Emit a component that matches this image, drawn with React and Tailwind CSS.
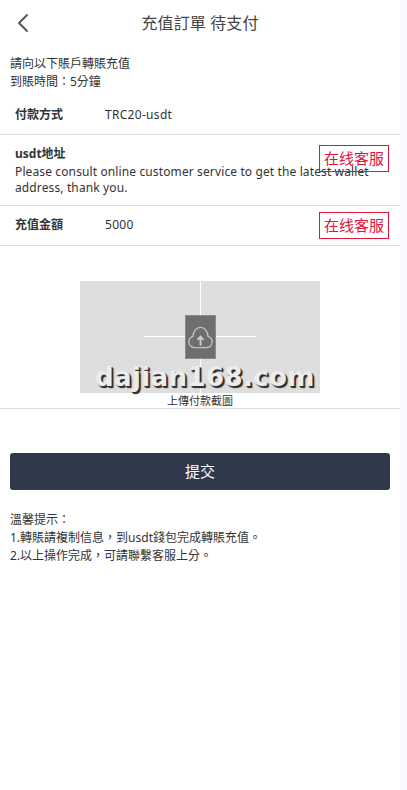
import { ChevronLeft } from "lucide-react";

const font = "font-['Noto_Sans','Noto_Sans_CJK_TC',sans-serif]";

const ServiceTag = ({ className }) => (
  <span className={`absolute right-[11px] border border-[#e0143c] px-[4px] h-[27px] leading-[25px] text-[15px] text-[#e0143c] whitespace-nowrap ${className}`}>
    在线客服
  </span>
);

const App = () => {
  return (
    <div className={`${font} w-full min-h-[790px] bg-[#f8f9ff] text-[#333]`}>
      <div className="w-[400px] min-h-[790px] bg-white">
        {/* header */}
        <div className="relative h-[46px] flex items-center justify-center text-[16px] tracking-[0.1px] text-[#444]">
          <ChevronLeft size={32} strokeWidth={1.4} className="absolute left-[7px] top-[7px] text-[#555]" />
          <span>充值訂單 待支付</span>
        </div>

        <div className="px-[10px] pt-[9px] text-[12px] leading-[18px]">
          <p>請向以下賬戶轉賬充值</p>
          <p>到賬時間：5分鐘</p>
        </div>

        {/* info rows */}
        <div className="mt-[7px] flex items-center h-[37px] pb-[2px] px-[15px] text-[12px] border-b border-[#ddd]">
          <b className="w-[90px] font-bold">付款方式</b>
          <span className="tracking-[0.3px]">TRC20-usdt</span>
        </div>
        <div className="relative px-[15px] pt-[11px] h-[71px] text-[12px] leading-[16px] border-b border-[#ddd]">
          <b className="block font-bold">usdt地址</b>
          <p className="mt-[2px] tracking-[0.12px]">Please consult online customer service to get the latest wallet address, thank you.</p>
          <ServiceTag className="top-[10px]" />
        </div>
        <div className="relative flex items-center h-[40px] pb-[2px] px-[15px] text-[12px] border-b border-[#ddd]">
          <b className="w-[90px] font-bold">充值金額</b>
          <span className="tracking-[0.3px]">5000</span>
          <ServiceTag className="top-[6px]" />
        </div>

        {/* upload */}
        <div className="mt-[35px] border-b border-[#ddd] h-[128px] flex flex-col items-center">
          <div className="relative w-[240px] h-[112px] shrink-0 bg-[#dedede] flex items-center justify-center">
            <div className="absolute left-[120px] top-0 bottom-0 w-px bg-white" />
            <div className="absolute left-[64px] top-[55px] w-[112px] h-px bg-white" />
            <div className="relative w-[31px] h-[44px] bg-[#6e6e6e] border border-[#8a8a8a] flex items-center justify-center">
              <svg width="30" height="30" viewBox="0 0 30 30" fill="none" stroke="#c4c4c4" strokeWidth="1.4">
                <path d="M9 26h12c3.500 0 6-2.600 6-6 0-2.800-1.800-5-4.200-5.700C22.600 9.400 19.400 5 15 5S7.400 9.400 7.200 14.300C4.800 15 3 17.200 3 20c0 3.400 2.500 6 6 6z" />
                <path d="M15 24v-9M12 18l3-3.500 3 3.500" strokeWidth="1.800" stroke="#d0d0d0" />
              </svg>
            </div>
            <span className="absolute left-[15px] top-[80px] text-[26px] leading-[32px] font-bold tracking-[0.4px] text-[#ececec] font-['DejaVu_Sans',sans-serif] whitespace-nowrap [text-shadow:1px_1px_0_#333,2px_2px_1px_#222]">
              dajian168.com
            </span>
          </div>
          <span className="mt-[1px] text-[11px] leading-[14px] text-[#333]">上傳付款截圖</span>
        </div>

        {/* submit */}
        <div className="px-[10px] mt-[44px]">
          <button className="w-full h-[37px] rounded-[3px] bg-[#30394c] text-white text-[15px]">提交</button>
        </div>

        <div className="px-[10px] mt-[21px] text-[12px] leading-[18px]">
          <p>溫馨提示：</p>
          <p>1.轉賬請複制信息，到usdt錢包完成轉賬充值。</p>
          <p>2.以上操作完成，可請聯繫客服上分。</p>
        </div>
      </div>
    </div>
  );
};

export default App;
